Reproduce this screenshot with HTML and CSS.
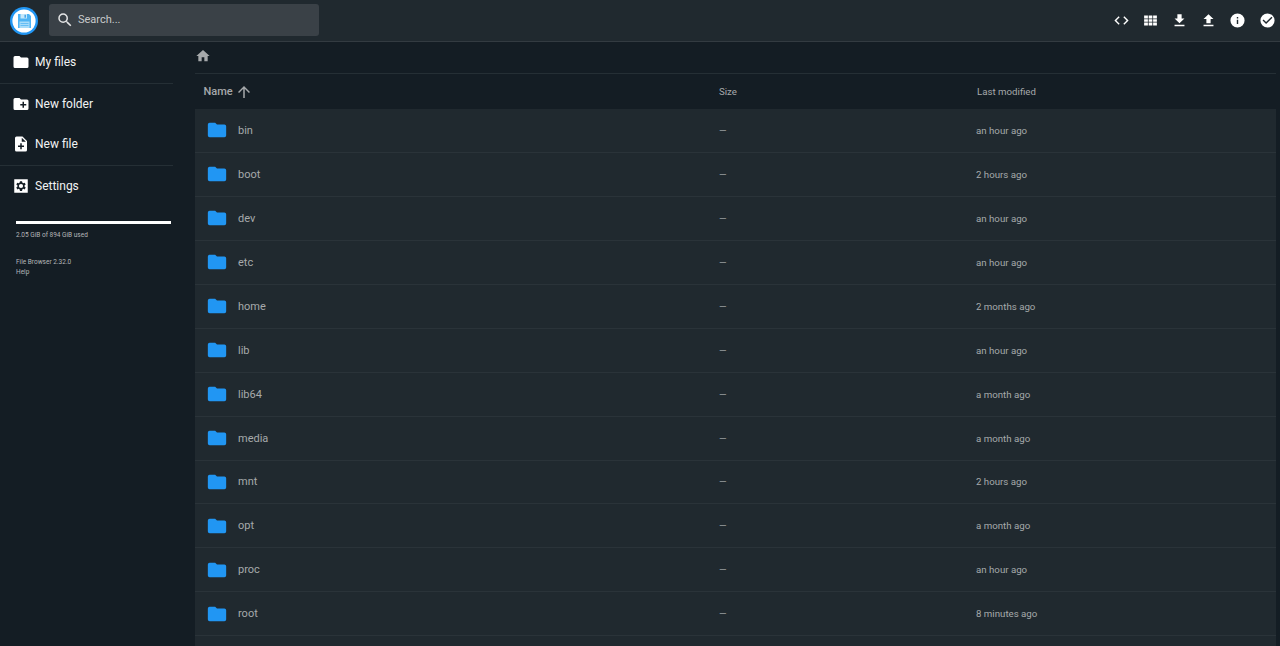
FILE: index.html
```html
<!DOCTYPE html>
<html lang="en">
<head>
  <meta charset="UTF-8">
  <title>My files - File Browser</title>
  <link rel="stylesheet" href="styles.css">
</head>
<body>

  <header class="topbar">
    <svg class="logo" viewBox="0 0 28 28">
      <circle cx="14" cy="14" r="14" fill="#2196f3"/>
      <circle cx="14" cy="14" r="11.6" fill="#fff"/>
      <path d="M8 7h11l2 2v12H8z" fill="#4fb4f4"/>
      <path d="M10.500 7h6.500v4.500h-6.500z" fill="#c6e8fb"/>
      <path d="M14.500 7.800h1.400v3h-1.400z" fill="#3c9fe6"/>
      <path d="M9.500 14.500h10V21h-10z" fill="#a9dcf9"/>
      <path d="M10.500 16.300h8v.8h-8zM10.500 18.300h8v.8h-8z" fill="#4fb4f4"/>
    </svg>
    <div class="search">
      <svg class="search-icon" viewBox="0 0 24 24"><path d="M15.5 14h-.79l-.28-.27A6.47 6.47 0 0 0 16 9.5 6.5 6.5 0 1 0 9.5 16c1.61 0 3.09-.59 4.23-1.57l.27.28v.79l5 4.99L20.49 19l-4.99-5zm-6 0C7.01 14 5 11.99 5 9.5S7.01 5 9.5 5 14 7.01 14 9.5 11.99 14 9.5 14z"/></svg>
      <span>Search...</span>
    </div>
    <div class="actions">
      <svg viewBox="0 0 24 24"><path d="M9.4 16.6 4.8 12l4.6-4.6L8 6l-6 6 6 6 1.4-1.4zm5.2 0 4.6-4.6-4.6-4.6L16 6l6 6-6 6-1.4-1.4z"/></svg>
      <svg viewBox="0 0 24 24"><path d="M3 5h5.300v4.300H3zM9.400 5h5.200v4.300H9.400zM15.700 5H21v4.300h-5.300zM3 10.400h5.300v3.200H3zM9.400 10.400h5.200v3.200H9.400zM15.700 10.400H21v3.200h-5.300zM3 14.700h5.300V19H3zM9.400 14.700h5.200V19H9.400zM15.700 14.700H21V19h-5.300z"/></svg>
      <svg viewBox="0 0 24 24"><path d="M19 9h-4V3H9v6H5l7 7 7-7zM5 18v2h14v-2H5z"/></svg>
      <svg viewBox="0 0 24 24"><path d="M9 16h6v-6h4l-7-7-7 7h4zm-4 2h14v2H5z"/></svg>
      <svg viewBox="0 0 24 24"><path d="M12 2a10 10 0 1 0 0 20 10 10 0 0 0 0-20zm1 15h-2v-6h2v6zm0-8h-2V7h2v2z"/></svg>
      <svg viewBox="0 0 24 24"><path d="M12 2a10 10 0 1 0 0 20 10 10 0 0 0 0-20zm-2 15-5-5 1.41-1.41L10 14.17l7.59-7.59L19 8l-9 9z"/></svg>
    </div>
  </header>

  <div class="layout">
    <nav class="sidebar">
      <div class="nav-group">
        <a class="nav-item"><svg viewBox="0 0 24 24"><path d="M10 4H4a2 2 0 0 0-2 2v12a2 2 0 0 0 2 2h16a2 2 0 0 0 2-2V8a2 2 0 0 0-2-2h-8l-2-2z"/></svg>My files</a>
      </div>
      <div class="nav-group">
        <a class="nav-item"><svg viewBox="0 0 24 24"><path d="M20 6h-8l-2-2H4a2 2 0 0 0-2 2v12a2 2 0 0 0 2 2h16a2 2 0 0 0 2-2V8a2 2 0 0 0-2-2zm-1 8h-3v3h-2v-3h-3v-2h3V9h2v3h3v2z"/></svg>New folder</a>
        <a class="nav-item"><svg viewBox="0 0 24 24"><path d="M14 2H6a2 2 0 0 0-2 2v16a2 2 0 0 0 2 2h12a2 2 0 0 0 2-2V8l-6-6zm2 14h-3v3h-2v-3H8v-2h3v-3h2v3h3v2zm-3-7V3.500L18.500 9H13z"/></svg>New file</a>
      </div>
      <div class="nav-group last">
        <a class="nav-item"><svg viewBox="0 0 24 24"><path fill-rule="evenodd" d="M3 3h18v18H3zM12 9.200a2.800 2.800 0 1 0 0 5.600a2.800 2.800 0 0 0 0-5.600zM10.600 5.500l-.3 1.900-1.400.8-1.800-.7-1.400 2.400 1.500 1.200v1.800l-1.500 1.200 1.400 2.400 1.800-.7 1.400.8.3 1.900h2.800l.3-1.900 1.400-.8 1.800.7 1.400-2.400-1.500-1.200v-1.800l1.500-1.200-1.400-2.400-1.800.7-1.400-.8-.3-1.900z"/></svg>Settings</a>
      </div>
      <div class="usage">
        <div class="usage-bar"></div>
        <span>2.05 GiB of 894 GiB used</span>
      </div>
      <div class="credits">
        <span>File Browser 2.32.0</span>
        <span>Help</span>
      </div>
    </nav>

    <main class="content">
      <div class="breadcrumbs">
        <svg viewBox="0 0 24 24"><path d="M10 20v-6h4v6h5v-8h3L12 3 2 12h3v8z"/></svg>
      </div>

      <div class="list-head">
        <div class="col-name"><b>Name</b><svg viewBox="0 0 24 24"><path d="M4 12l1.410 1.410L11 7.830V20h2V7.830l5.580 5.590L20 12l-8-8-8 8z"/></svg></div>
        <div class="col-size">Size</div>
        <div class="col-date">Last modified</div>
      </div>

      <div class="row"><svg class="folder" viewBox="0 0 24 24"><use href="#folder"/></svg><div class="col-file">bin</div><div class="col-size">—</div><div class="col-date">an hour ago</div></div>
      <div class="row"><svg class="folder" viewBox="0 0 24 24"><use href="#folder"/></svg><div class="col-file">boot</div><div class="col-size">—</div><div class="col-date">2 hours ago</div></div>
      <div class="row"><svg class="folder" viewBox="0 0 24 24"><use href="#folder"/></svg><div class="col-file">dev</div><div class="col-size">—</div><div class="col-date">an hour ago</div></div>
      <div class="row"><svg class="folder" viewBox="0 0 24 24"><use href="#folder"/></svg><div class="col-file">etc</div><div class="col-size">—</div><div class="col-date">an hour ago</div></div>
      <div class="row"><svg class="folder" viewBox="0 0 24 24"><use href="#folder"/></svg><div class="col-file">home</div><div class="col-size">—</div><div class="col-date">2 months ago</div></div>
      <div class="row"><svg class="folder" viewBox="0 0 24 24"><use href="#folder"/></svg><div class="col-file">lib</div><div class="col-size">—</div><div class="col-date">an hour ago</div></div>
      <div class="row"><svg class="folder" viewBox="0 0 24 24"><use href="#folder"/></svg><div class="col-file">lib64</div><div class="col-size">—</div><div class="col-date">a month ago</div></div>
      <div class="row"><svg class="folder" viewBox="0 0 24 24"><use href="#folder"/></svg><div class="col-file">media</div><div class="col-size">—</div><div class="col-date">a month ago</div></div>
      <div class="row"><svg class="folder" viewBox="0 0 24 24"><use href="#folder"/></svg><div class="col-file">mnt</div><div class="col-size">—</div><div class="col-date">2 hours ago</div></div>
      <div class="row"><svg class="folder" viewBox="0 0 24 24"><use href="#folder"/></svg><div class="col-file">opt</div><div class="col-size">—</div><div class="col-date">a month ago</div></div>
      <div class="row"><svg class="folder" viewBox="0 0 24 24"><use href="#folder"/></svg><div class="col-file">proc</div><div class="col-size">—</div><div class="col-date">an hour ago</div></div>
      <div class="row"><svg class="folder" viewBox="0 0 24 24"><use href="#folder"/></svg><div class="col-file">root</div><div class="col-size">—</div><div class="col-date">8 minutes ago</div></div>
      <div class="row"></div>
    </main>
  </div>

  <svg class="defs" width="0" height="0"><defs><path id="folder" d="M10 4H4a2 2 0 0 0-2 2v12a2 2 0 0 0 2 2h16a2 2 0 0 0 2-2V8a2 2 0 0 0-2-2h-8l-2-2z"/></defs></svg>

</body>
</html>
```
FILE: styles.css
```css
html, body {
  height: 100%;
}

body {
  margin: 0;
  background: #141d24;
  color: #fff;
  font-family: Roboto, "Liberation Sans", sans-serif;
  overflow: hidden;
}

.defs {
  position: absolute;
}

.topbar {
  display: flex;
  align-items: center;
  height: 41px;
  background: #20292f;
  border-bottom: 1px solid #333b41;
}

.logo {
  width: 28px;
  height: 28px;
  margin-left: 10px;
  flex: none;
}

.search {
  display: flex;
  align-items: center;
  box-sizing: border-box;
  width: 270px;
  height: 32px;
  margin-left: 11px;
  margin-bottom: 2px;
  padding-left: 7px;
  background: #3a4147;
  border-radius: 3px;
  font-size: 11px;
  color: #c8cacb;
}

.search-icon {
  width: 18px;
  height: 18px;
  margin-right: 4px;
  fill: #e4e5e6;
}

.actions {
  display: flex;
  align-items: center;
  gap: 12.2px;
  margin-left: auto;
  margin-right: 4.5px;
}

.actions svg {
  width: 17px;
  height: 17px;
  fill: #fff;
}

.layout {
  display: flex;
  height: 604px;
}

.sidebar {
  width: 173px;
  flex: none;
  margin-right: 22px;
}

.nav-group {
  display: flex;
  flex-direction: column;
  border-bottom: 1px solid #252f35;
}

.nav-group.last {
  border-bottom: none;
}

.nav-item {
  display: flex;
  align-items: center;
  height: 40.5px;
  padding-left: 12px;
  font-size: 12px;
  color: #f2f3f3;
}

.nav-item svg {
  width: 18px;
  height: 18px;
  margin-right: 5px;
  fill: #fff;
}

.usage {
  margin: 15px 2px 0 16px;
  font-size: 6.5px;
  color: #b4b7b9;
}

.usage-bar {
  height: 3px;
  margin-bottom: 7px;
  background: #fff;
}

.usage span {
  display: block;
}

.credits {
  margin: 18px 0 0 16px;
  font-size: 6.5px;
  line-height: 10px;
  color: #b4b7b9;
}

.credits span {
  display: block;
}

.content {
  flex: 1;
  min-width: 0;
  margin-right: 4px;
  overflow: hidden;
}

.breadcrumbs {
  display: flex;
  align-items: center;
  height: 32px;
  padding-bottom: 4px;
  box-sizing: border-box;
  border-bottom: 1px solid #252f35;
}

.breadcrumbs svg {
  width: 16px;
  height: 16px;
  fill: #a6a9ab;
}

.list-head {
  display: flex;
  align-items: center;
  height: 35px;
  font-size: 9.7px;
  color: #a6a9ab;
}

.list-head .col-name {
  display: flex;
  align-items: center;
  width: 524px;
  padding-left: 8.5px;
  box-sizing: border-box;
}

.list-head b {
  font-size: 11px;
  font-weight: 500;
}

.list-head .col-name svg {
  width: 18px;
  height: 18px;
  margin-left: 2px;
  fill: #a6a9ab;
}

.col-size {
  width: 258px;
}

.row {
  display: flex;
  align-items: center;
  height: 42.95px;
  background: #20292f;
  border-bottom: 1px solid #2a3339;
  font-size: 9.7px;
  color: #a6a9ab;
}

.folder {
  width: 22px;
  height: 22px;
  margin-left: 11px;
  fill: #2196f3;
  flex: none;
}

.col-file {
  width: 481px;
  margin-left: 10px;
  font-size: 11px;
}

.row .col-date {
  margin-left: -1px;
}
```
